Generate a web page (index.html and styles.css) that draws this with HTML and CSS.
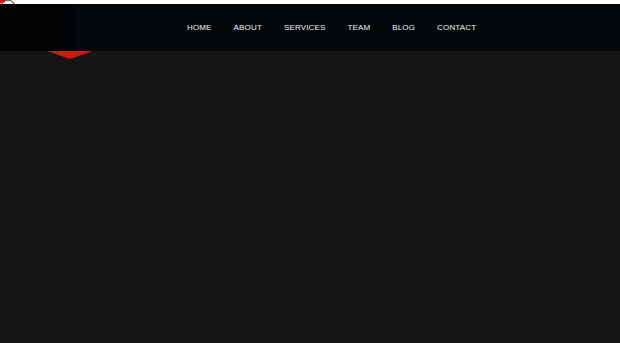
FILE: index.html
```html
<!DOCTYPE html>
<html lang="en">
<head>
    <meta charset="UTF-8">
    <meta name="viewport" content="width=device-width, initial-scale=1.0">
    <title>Home</title>
    <link rel="stylesheet" href="styles.css">
</head>
<body>
    <div class="top-strip"></div>

    <!-- Preloader ring, left over in the corner -->
    <svg class="loader" width="20" height="18" viewBox="0 0 20 18">
        <path d="M0 0 H5 V2 A4 4 0 0 0 0 5 Z" fill="#e0120c"/>
        <circle cx="8" cy="6.5" r="6.5" fill="none" stroke="#5a0a08" stroke-width="1"/>
    </svg>

    <header class="navbar">
        <div class="brand">
            <span class="brand-arrow"></span>
        </div>
        <nav class="menu">
            <a href="#">HOME</a>
            <a href="#">ABOUT</a>
            <a href="#">SERVICES</a>
            <a href="#">TEAM</a>
            <a href="#">BLOG</a>
            <a href="#">CONTACT</a>
        </nav>
    </header>

    <section class="hero"></section>
</body>
</html>
```

FILE: styles.css
```css
/* Reset */
* {
    margin: 0;
    padding: 0;
    box-sizing: border-box;
}

body {
    font-family: 'Liberation Sans', Arial, sans-serif;
    background-color: #141414;
    color: #f2f2f2;
    height: 343px;
    overflow: hidden;
}

.top-strip {
    height: 4px;
    background-color: #ffffff;
}

.loader {
    position: absolute;
    top: 0;
    left: 0;
}

/* Navbar */
.navbar {
    display: flex;
    align-items: center;
    height: 47px;
    background-color: #03070a;
}

.brand {
    position: relative;
    width: 74px;
    height: 100%;
    background-color: #010305;
}

.brand-arrow {
    position: absolute;
    left: 47px;
    top: 100%;
    width: 0;
    height: 0;
    border-left: 23px solid transparent;
    border-right: 23px solid transparent;
    border-top: 8px solid #e3130b;
}

.menu {
    display: flex;
    gap: 22px;
    margin-left: 113px;
}

.menu a {
    color: #f4f4f4;
    text-decoration: none;
    font-size: 8px;
    letter-spacing: 0.15px;
    line-height: 1;
}

.hero {
    height: 292px;
    background-color: #141414;
}
```
